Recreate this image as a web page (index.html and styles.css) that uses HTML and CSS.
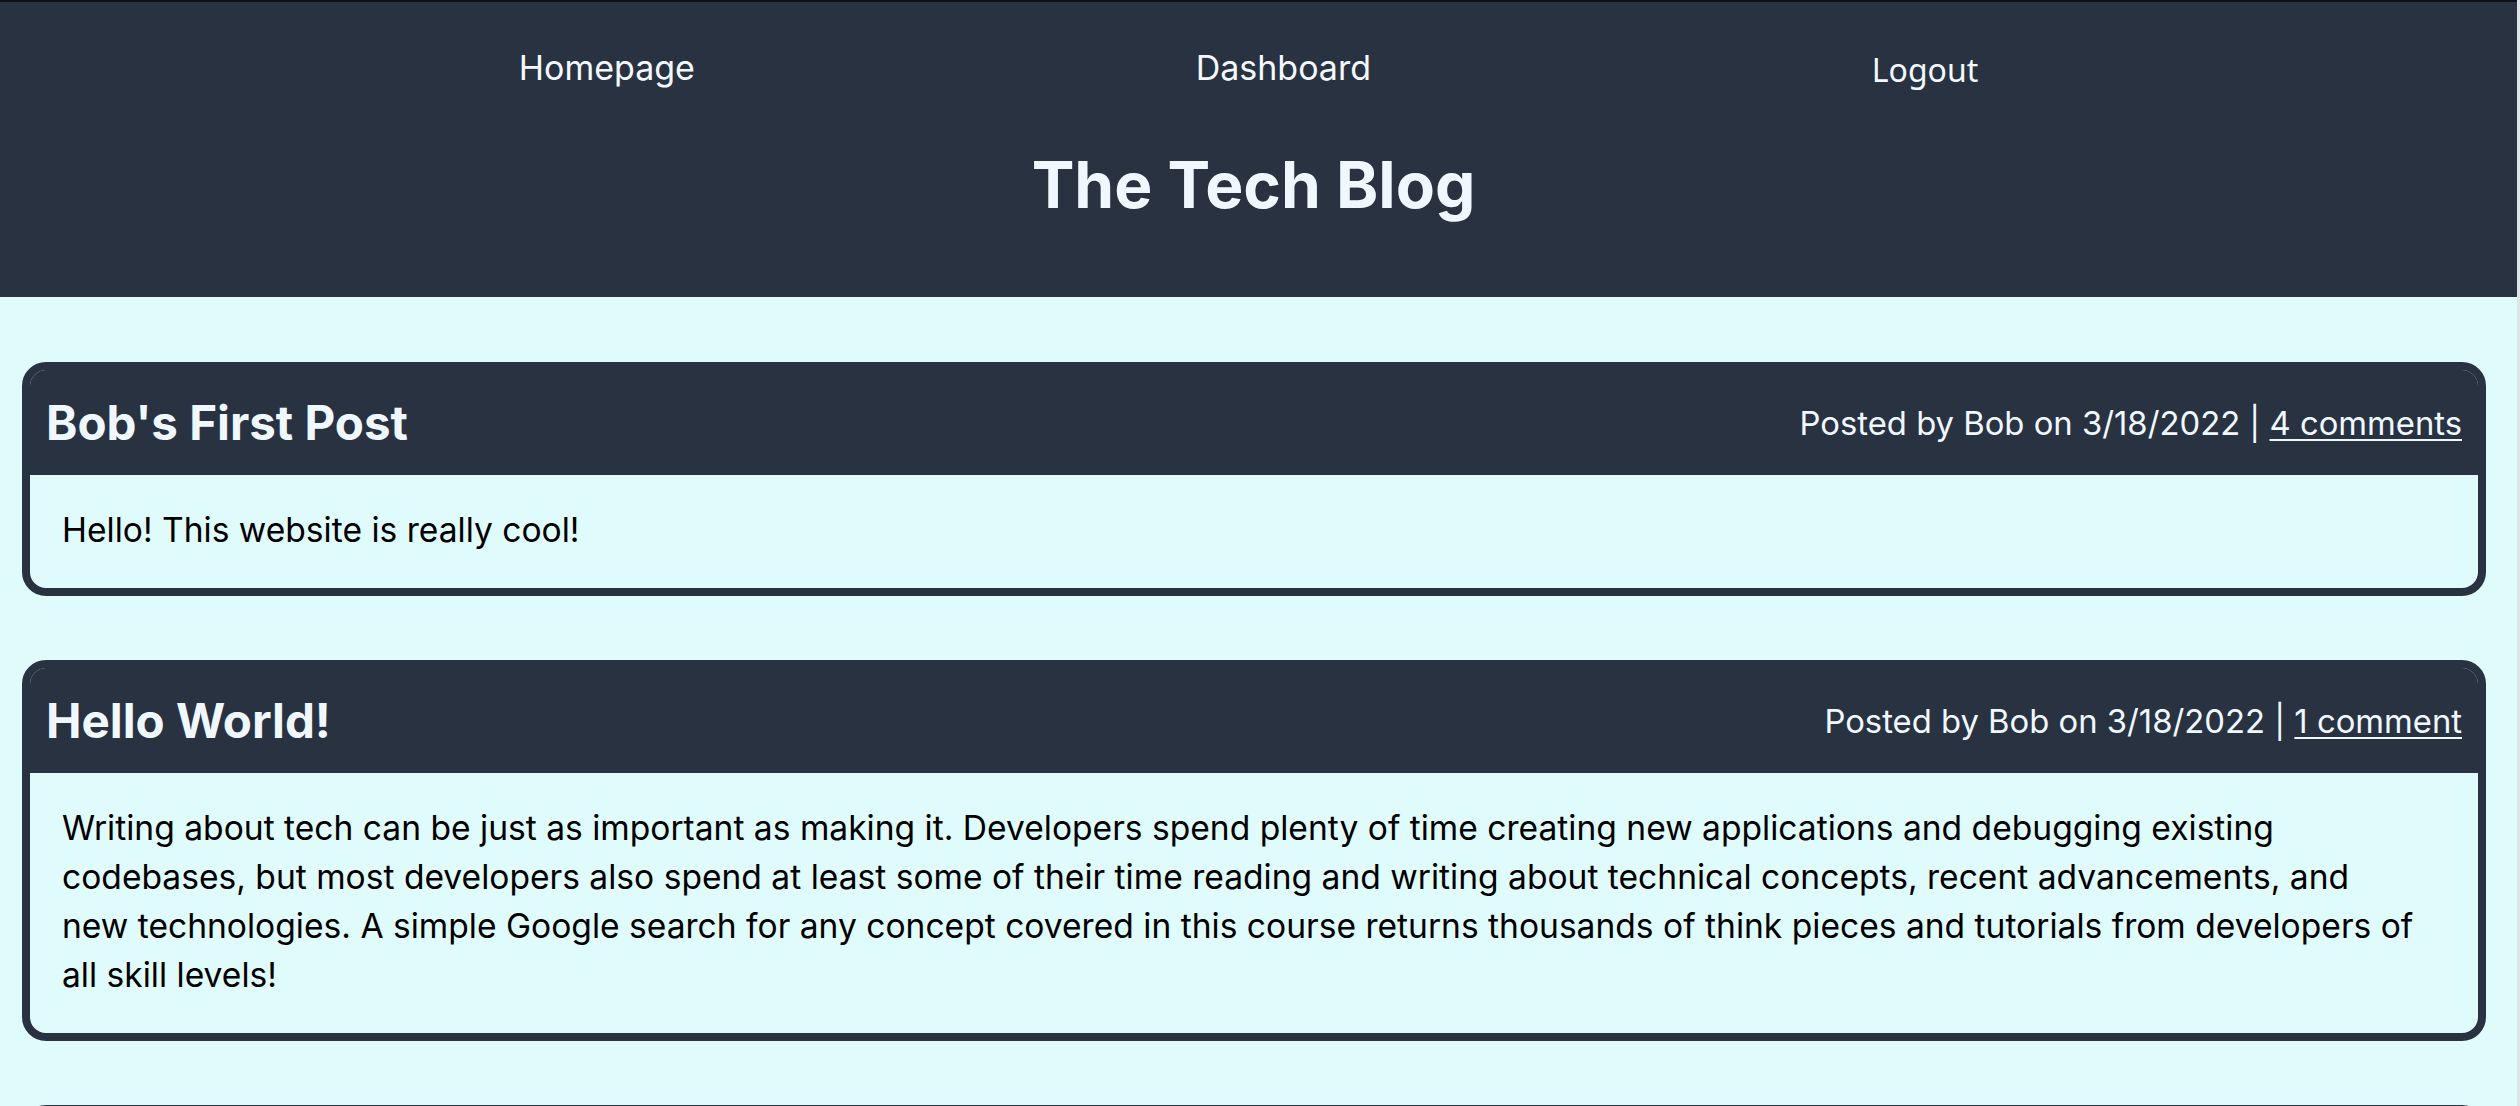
FILE: index.html
```html
<!DOCTYPE html>
<html lang="en">
<head>
<meta charset="utf-8">
<title>The Tech Blog</title>
<link rel="stylesheet" href="styles.css">
</head>
<body>
  <header class="site-header">
    <nav class="site-nav">
      <a class="nav-link" href="#">Homepage</a>
      <a class="nav-link" href="#">Dashboard</a>
      <button class="nav-btn" type="button">Logout</button>
    </nav>
    <h1 class="site-title">The Tech Blog</h1>
  </header>

  <main class="posts">
    <article class="post">
      <div class="post-head">
        <h2 class="post-title">Bob's First Post</h2>
        <p class="post-meta">Posted by Bob on 3/18/2022 | <a class="post-comments" href="#">4 comments</a></p>
      </div>
      <div class="post-body">
        <p class="post-text">Hello! This website is really cool!</p>
      </div>
    </article>

    <article class="post">
      <div class="post-head">
        <h2 class="post-title">Hello World!</h2>
        <p class="post-meta">Posted by Bob on 3/18/2022 | <a class="post-comments" href="#">1 comment</a></p>
      </div>
      <div class="post-body">
        <p class="post-text">Writing about tech can be just as important as making it. Developers spend plenty of time creating new applications and debugging existing<br>codebases, but most developers also spend at least some of their time reading and writing about technical concepts, recent advancements, and<br>new technologies. A simple Google search for any concept covered in this course returns thousands of think pieces and tutorials from developers of<br>all skill levels!</p>
      </div>
    </article>

    <article class="post">
      <div class="post-head">
        <h2 class="post-title">Learning Handlebars</h2>
        <p class="post-meta">Posted by Bob on 3/18/2022 | <a class="post-comments" href="#">0 comments</a></p>
      </div>
      <div class="post-body">
        <p class="post-text">Templating engines make it easy to render dynamic pages on the server.</p>
      </div>
    </article>
  </main>
</body>
</html>
```
FILE: styles.css
```css
html {
  background: #dfe4e7;
}

body {
  margin: 0 3px 0 0;
  min-height: 100vh;
  background: #e0fbfc;
  font-family: "Inter", "Noto Sans", sans-serif;
  color: #000;
}

.site-header {
  background: #293241;
  border-top: 2px solid #0e1015;
  padding: 42px 10px 64px 0;
}

.site-nav {
  display: flex;
  justify-content: space-evenly;
  align-items: flex-start;
  height: 48px;
  padding: 0 28px 0 18px;
}

.nav-link {
  font-size: 34px;
  line-height: 48px;
  color: #f4f9ff;
  text-decoration: none;
}

.nav-btn {
  font-family: "Noto Sans", "Open Sans", sans-serif;
  font-size: 32px;
  line-height: 45px;
  color: #f4f9ff;
  background: none;
  border: 0;
  padding: 3px 0 0;
  margin: 0;
  cursor: pointer;
}

.site-title {
  margin: 45px 0 0;
  font-size: 64px;
  line-height: 96px;
  font-weight: 700;
  text-align: center;
  color: #f0f8ff;
}

.posts {
  display: flex;
  flex-direction: column;
  gap: 64px;
  padding: 65px 31px 0 22px;
}

.post {
  border: 8px solid #293241;
  border-radius: 24px;
  background: #e0fbfc;
  overflow: hidden;
}

.post-head {
  display: flex;
  justify-content: space-between;
  align-items: center;
  padding: 16px;
  background: #293241;
  color: #f0f8ff;
}

.post-title {
  margin: 0;
  font-size: 47.5px;
  line-height: 73px;
  font-weight: 700;
}

.post-meta {
  margin: 0;
  font-size: 32.8px;
  line-height: 48px;
  color: #f0f8ff;
}

.post-comments {
  color: inherit;
  text-decoration: underline;
  text-decoration-thickness: 2px;
  text-underline-offset: 4px;
}

.post-body {
  padding: 30px 32px 34px;
}

.post-text {
  margin: 0;
  font-size: 33.6px;
  line-height: 49px;
}
```
